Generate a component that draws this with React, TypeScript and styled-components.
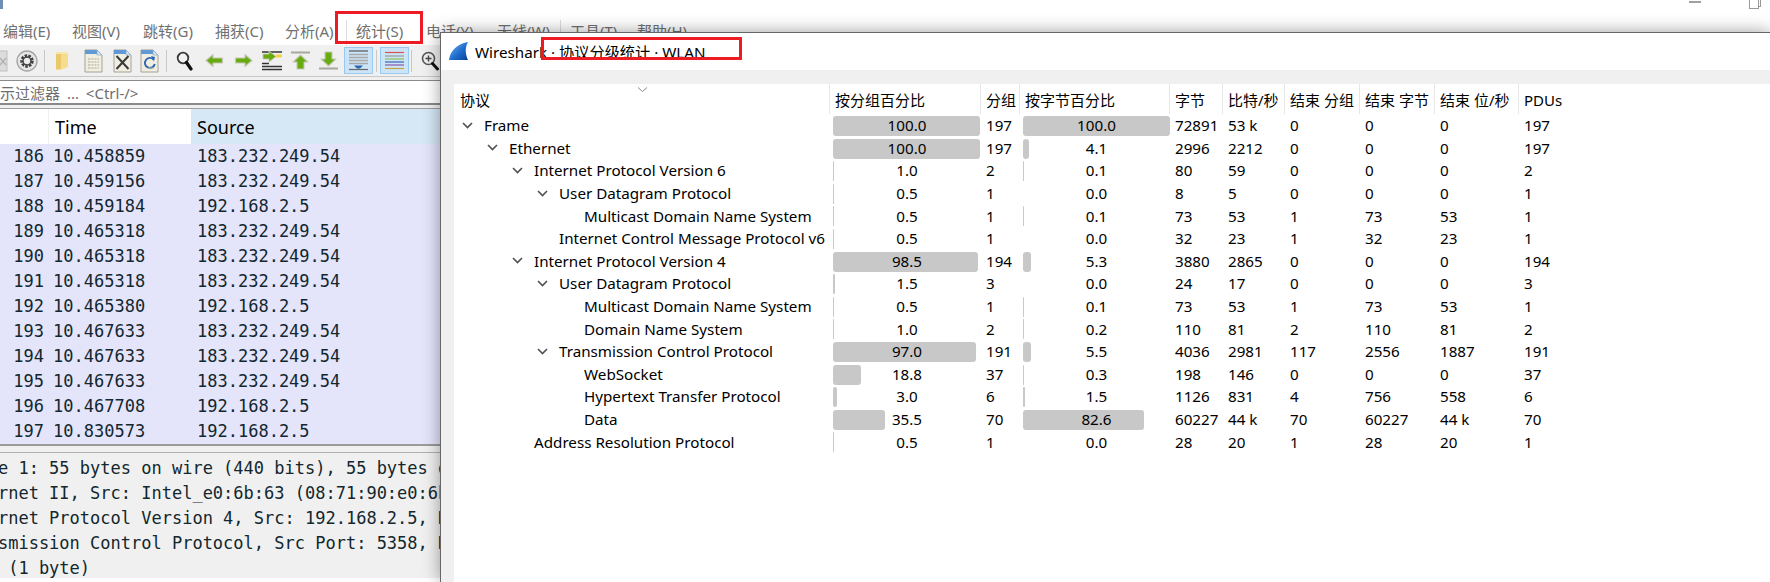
import React from 'react';
import styled, { createGlobalStyle } from 'styled-components';

const UI_FONT = `"Noto Sans", "Noto Sans CJK SC", sans-serif`;
const MONO_FONT = `"DejaVu Sans Mono", "Liberation Mono", monospace`;

const GlobalStyle = createGlobalStyle`
  html, body {
    margin: 0;
    padding: 0;
    background: #fff;
    overflow: hidden;
  }
  * {
    box-sizing: border-box;
  }
`;

/* ---------- data ---------- */

const MENUS = [
  { label: '编辑(E)', width: 69 },
  { label: '视图(V)', width: 71 },
  { label: '跳转(G)', width: 72 },
  { label: '捕获(C)', width: 70 },
  { label: '分析(A)', width: 62, divider: true },
  { label: '统计(S)', width: 70 },
  { label: '电话(Y)', width: 71 },
  { label: '无线(W)', width: 64, divider: true },
  { label: '工具(T)', width: 67 },
  { label: '帮助(H)', width: 70 },
];

const PACKETS = [
  ['186', '10.458859', '183.232.249.54'],
  ['187', '10.459156', '183.232.249.54'],
  ['188', '10.459184', '192.168.2.5'],
  ['189', '10.465318', '183.232.249.54'],
  ['190', '10.465318', '183.232.249.54'],
  ['191', '10.465318', '183.232.249.54'],
  ['192', '10.465380', '192.168.2.5'],
  ['193', '10.467633', '183.232.249.54'],
  ['194', '10.467633', '183.232.249.54'],
  ['195', '10.467633', '183.232.249.54'],
  ['196', '10.467708', '192.168.2.5'],
  ['197', '10.830573', '192.168.2.5'],
];

const DETAILS = [
  'Frame 1: 55 bytes on wire (440 bits), 55 bytes on wire (440 bits)',
  'Ethernet II, Src: Intel_e0:6b:63 (08:71:90:e0:6b:63), Dst: Hiwifi',
  'Internet Protocol Version 4, Src: 192.168.2.5, Dst: 183.232.249.54',
  'Transmission Control Protocol, Src Port: 5358, Dst Port: 443',
  'Data (1 byte)',
];

const HEADERS = ['协议', '按分组百分比', '分组', '按字节百分比', '字节', '比特/秒', '结束 分组', '结束 字节', '结束 位/秒', 'PDUs'];

type Proto = {
  name: string;
  depth: number;
  open?: boolean;
  pktPct: string;
  bytePct: string;
  cols: string[];
};

const PROTOCOLS: Proto[] = [
  { name: 'Frame', depth: 0, open: true, pktPct: '100.0', bytePct: '100.0', cols: ['197', '72891', '53 k', '0', '0', '0', '197'] },
  { name: 'Ethernet', depth: 1, open: true, pktPct: '100.0', bytePct: '4.1', cols: ['197', '2996', '2212', '0', '0', '0', '197'] },
  { name: 'Internet Protocol Version 6', depth: 2, open: true, pktPct: '1.0', bytePct: '0.1', cols: ['2', '80', '59', '0', '0', '0', '2'] },
  { name: 'User Datagram Protocol', depth: 3, open: true, pktPct: '0.5', bytePct: '0.0', cols: ['1', '8', '5', '0', '0', '0', '1'] },
  { name: 'Multicast Domain Name System', depth: 4, pktPct: '0.5', bytePct: '0.1', cols: ['1', '73', '53', '1', '73', '53', '1'] },
  { name: 'Internet Control Message Protocol v6', depth: 3, pktPct: '0.5', bytePct: '0.0', cols: ['1', '32', '23', '1', '32', '23', '1'] },
  { name: 'Internet Protocol Version 4', depth: 2, open: true, pktPct: '98.5', bytePct: '5.3', cols: ['194', '3880', '2865', '0', '0', '0', '194'] },
  { name: 'User Datagram Protocol', depth: 3, open: true, pktPct: '1.5', bytePct: '0.0', cols: ['3', '24', '17', '0', '0', '0', '3'] },
  { name: 'Multicast Domain Name System', depth: 4, pktPct: '0.5', bytePct: '0.1', cols: ['1', '73', '53', '1', '73', '53', '1'] },
  { name: 'Domain Name System', depth: 4, pktPct: '1.0', bytePct: '0.2', cols: ['2', '110', '81', '2', '110', '81', '2'] },
  { name: 'Transmission Control Protocol', depth: 3, open: true, pktPct: '97.0', bytePct: '5.5', cols: ['191', '4036', '2981', '117', '2556', '1887', '191'] },
  { name: 'WebSocket', depth: 4, pktPct: '18.8', bytePct: '0.3', cols: ['37', '198', '146', '0', '0', '0', '37'] },
  { name: 'Hypertext Transfer Protocol', depth: 4, pktPct: '3.0', bytePct: '1.5', cols: ['6', '1126', '831', '4', '756', '558', '6'] },
  { name: 'Data', depth: 4, pktPct: '35.5', bytePct: '82.6', cols: ['70', '60227', '44 k', '70', '60227', '44 k', '70'] },
  { name: 'Address Resolution Protocol', depth: 2, pktPct: '0.5', bytePct: '0.0', cols: ['1', '28', '20', '1', '28', '20', '1'] },
];

/* ---------- toolbar icons ---------- */

const Svg = styled.svg`
  display: block;
  flex-shrink: 0;
`;

const CutIcon = () => (
  <Svg width="9" height="22" viewBox="0 0 9 22">
    <rect x="-6" y="1" width="13" height="20" fill="#dcdcdc" stroke="#bdbdbd" />
    <path d="M0 8l6 7M6 8l-6 7" stroke="#b0b0b0" strokeWidth="1.3" />
  </Svg>
);

const GearIcon = () => (
  <Svg width="22" height="22" viewBox="0 0 22 22">
    <circle cx="11" cy="11" r="10" fill="#e6e6e6" stroke="#a4a4a4" strokeWidth="1.3" />
    <circle cx="11" cy="11" r="5.2" fill="none" stroke="#3f3f3f" strokeWidth="3" strokeDasharray="2.4 1.2" />
    <circle cx="11" cy="11" r="4" fill="none" stroke="#444" strokeWidth="1.4" />
    <circle cx="11" cy="11" r="2.2" fill="#eee" />
  </Svg>
);

const FolderIcon = () => (
  <Svg width="14" height="20" viewBox="0 0 14 20">
    <path d="M1 1h12v15l-8 3H1z" fill="#f6dc8c" />
    <path d="M1 1h5v17H1z" fill="#e8c96c" />
    <path d="M1 1h12v2H1z" fill="#f9e7a9" />
  </Svg>
);

const DocBase = ({ children }: { children?: React.ReactNode }) => (
  <Svg width="19" height="24" viewBox="0 0 19 24">
    <path d="M1 1h12l5 5v17H1z" fill="#f0eee0" stroke="#a3a396" />
    <path d="M1 1h12v4H1z" fill="#5f9ad6" />
    <path d="M13 1l5 5h-5z" fill="#d8e6f2" stroke="#7da3c8" strokeWidth=".6" />
    {children}
  </Svg>
);

const DocGridIcon = () => (
  <DocBase>
    <path d="M4 9h11v11H4z" fill="#cfcbb8" />
    <path d="M4 11.5h11M4 14.5h11M4 17.5h11M7 9v11M10 9v11M13 9v11" stroke="#f5f3e8" strokeWidth=".9" />
  </DocBase>
);

const DocCloseIcon = () => (
  <DocBase>
    <path d="M3.5 7l12 13M15.5 7l-12 13" stroke="#3a3a3a" strokeWidth="2" />
  </DocBase>
);

const DocReloadIcon = () => (
  <DocBase>
    <path d="M13.6 10.5a5 5 0 1 0 1.2 4.5" fill="none" stroke="#2a67b4" strokeWidth="1.9" />
    <path d="M11 7l4 1-1 4.5z" fill="#2a67b4" />
    <path d="M8 19h6" stroke="#b9b6a4" strokeWidth="1" />
  </DocBase>
);

const SearchIcon = () => (
  <Svg width="17" height="20" viewBox="0 0 17 20">
    <circle cx="7" cy="7" r="5.3" fill="#f2f2f2" stroke="#3a3a3a" strokeWidth="1.8" />
    <path d="M10.5 11.5L15 18" stroke="#111" strokeWidth="3.2" strokeLinecap="round" />
  </Svg>
);

const ArrowH = ({ dir }: { dir: 'left' | 'right' }) => (
  <Svg width="19" height="15" viewBox="0 0 19 15">
    <g transform={dir === 'right' ? 'translate(19 0) scale(-1 1)' : undefined}>
      <path d="M1 7.5L8 1.5v3.5h9.5v5H8v3.5z" fill="#67ab10" stroke="#c8c8b8" strokeWidth="1.2" strokeLinejoin="round" />
    </g>
  </Svg>
);

const GoToIcon = () => (
  <Svg width="20" height="20" viewBox="0 0 20 20">
    <path d="M0 1h20M0 15.5h20M0 18.5h20M0 12.5h7" stroke="#333" strokeWidth="1.6" />
    <path d="M14 5h6" stroke="#f3d34a" strokeWidth="3" />
    <path d="M1 3h6V0l7 5.5L7 11V8H1z" fill="#67ab10" stroke="#c8c8b8" strokeWidth=".9" />
  </Svg>
);

const GoTopIcon = () => (
  <Svg width="19" height="19" viewBox="0 0 19 19">
    <path d="M0 1.5h19" stroke="#a8a89e" strokeWidth="2" />
    <path d="M9.5 4L17 11h-4v7H6v-7H2z" fill="#67ab10" stroke="#c8c8b8" strokeWidth="1.1" strokeLinejoin="round" />
  </Svg>
);

const GoBottomIcon = () => (
  <Svg width="19" height="19" viewBox="0 0 19 19">
    <path d="M0 17.5h19" stroke="#a8a89e" strokeWidth="2" />
    <path d="M9.5 15L2 8h4V1h7v7h4z" fill="#67ab10" stroke="#c8c8b8" strokeWidth="1.1" strokeLinejoin="round" />
  </Svg>
);

const AutoScrollIcon = () => (
  <Svg width="21" height="21" viewBox="0 0 21 21">
    <path d="M1 1h19" stroke="#555" strokeWidth="1.2" />
    <path d="M1 4.5h19M1 7.5h19M1 10.5h19M1 13.5h19" stroke="#a8a8a8" strokeWidth="1.4" />
    <path d="M1 19.5h19" stroke="#666" strokeWidth="1.2" />
    <path d="M6 15.5h9l-3 3h-3z" fill="#2a66a8" />
  </Svg>
);

const ColorizeIcon = () => (
  <Svg width="19" height="19" viewBox="0 0 19 19">
    <path d="M0 1.5h19" stroke="#d9534f" strokeWidth="1.2" />
    <path d="M0 5h19" stroke="#999" strokeWidth="1.2" />
    <path d="M0 8h19" stroke="#8cc152" strokeWidth="1.2" />
    <path d="M0 11h19" stroke="#3f62b5" strokeWidth="1.2" />
    <path d="M0 14h19" stroke="#8a5aa8" strokeWidth="1.2" />
    <path d="M0 17.5h19" stroke="#c9a23c" strokeWidth="1.2" />
  </Svg>
);

const ZoomInIcon = () => (
  <Svg width="18" height="20" viewBox="0 0 18 20">
    <circle cx="7.5" cy="7.5" r="6" fill="#eee" stroke="#555" strokeWidth="1.6" />
    <path d="M4.5 7.5h6M7.5 4.5v6" stroke="#444" strokeWidth="1.4" />
    <path d="M11.5 12.5L16.5 18" stroke="#111" strokeWidth="3" strokeLinecap="round" />
  </Svg>
);

const SharkFin = () => (
  <Svg width="20" height="20" viewBox="0 0 20 20">
    <defs>
      <linearGradient id="fin" x1="0" y1="0" x2="1" y2="1">
        <stop offset="0" stopColor="#7fb6ee" />
        <stop offset=".55" stopColor="#1f6fd0" />
        <stop offset="1" stopColor="#0a3f92" />
      </linearGradient>
    </defs>
    <path d="M0 19C1 11 7 3 19 1c-3 5-3 12 0 18z" fill="url(#fin)" />
  </Svg>
);

const Chevron = () => (
  <Svg width="11" height="7" viewBox="0 0 11 7">
    <path d="M1 1l4.5 4.5L10 1" fill="none" stroke="#505050" strokeWidth="1.6" />
  </Svg>
);

/* ---------- page ---------- */

const Desktop = styled.div`
  position: relative;
  width: 1770px;
  height: 582px;
  overflow: hidden;
  background: #fff;
  font-family: ${UI_FONT};
`;

const TitleStrip = styled.div`
  height: 20px;
  display: flex;
  justify-content: space-between;
  padding-right: 11px;
`;

const AppGlyph = styled.div`
  width: 3px;
  height: 9px;
  background: #6d8fb5;
`;

const WindowButtons = styled.div`
  display: flex;
  gap: 46px;
`;

const MinimizeBtn = styled.div`
  width: 12px;
  height: 2px;
  margin-top: 1px;
  background: #a0a0a0;
`;

const RestoreBtn = styled.div`
  position: relative;
  width: 10px;
  height: 9px;
  margin: 0 0 0 2px;
  border: 1px solid #999;
  border-top: 0;

  &::after {
    content: '';
    position: absolute;
    right: -3px;
    top: 0;
    width: 2px;
    height: 6px;
    border: 1px solid #999;
    border-top: 0;
    border-left: 0;
  }
`;

const MenuBar = styled.div`
  height: 25px;
  display: flex;
  align-items: center;
  padding-left: 3px;
`;

const MenuItem = styled.div<{ $w: number; $divider?: boolean }>`
  width: ${p => p.$w}px;
  height: 100%;
  flex-shrink: 0;
  display: flex;
  align-items: center;
  padding-bottom: 4px;
  font-size: 15px;
  color: #707070;
  white-space: nowrap;
  border-right: ${p => (p.$divider ? '1px solid #dcdcdc' : '0')};
  margin-right: ${p => (p.$divider ? '9px' : '0')};
`;

const Toolbar = styled.div`
  height: 31px;
  display: flex;
  align-items: center;
  background: #f0f0f0;
`;

const ToolCell = styled.div<{ $w: number; $start?: boolean }>`
  width: ${p => p.$w}px;
  height: 100%;
  flex-shrink: 0;
  display: flex;
  align-items: center;
  justify-content: ${p => (p.$start ? 'flex-start' : 'center')};
`;

const ToolSep = styled.div<{ $w: number }>`
  width: ${p => p.$w}px;
  flex-shrink: 0;
  height: 22px;
  display: flex;
  justify-content: center;

  &::before {
    content: '';
    width: 1px;
    height: 100%;
    background: #c9c9c9;
  }
`;

const ToggledTool = styled.div`
  width: 29px;
  height: 27px;
  flex-shrink: 0;
  display: flex;
  align-items: center;
  justify-content: center;
  background: #cce4f7;
  border: 1px solid #99c9ef;
`;

const FilterWrap = styled.div`
  height: 29px;
  background: #f0f0f0;
  border-top: 1px solid #c8c8c8;
  padding-top: 3px;
`;

const FilterInput = styled.div`
  height: 25px;
  background: #fff;
  border-top: 1px solid #8a8a8a;
  border-bottom: 2px solid #8a8a8a;
  overflow: hidden;
  display: flex;
  align-items: center;
`;

const FilterText = styled.span`
  margin-left: -45px;
  font-size: 15px;
  word-spacing: 3px;
  color: #6d6d6d;
  white-space: nowrap;
`;

const ListTop = styled.div`
  height: 4px;
  background: #f0f0f0;
  border-bottom: 1px solid #a0a0a0;
`;

const ListHeader = styled.div`
  height: 35px;
  display: grid;
  grid-template-columns: 48px 143px 1fr;
  background: #fff;
  font-size: 18px;
  color: #000;
`;

const HeaderCell = styled.div<{ $active?: boolean }>`
  display: flex;
  align-items: center;
  padding-left: 6px;
  background: ${p => (p.$active ? '#d6e8f6' : '#fff')};
  border-left: ${p => (p.$active ? '0' : '1px solid #f0f0f0')};
`;

const PacketRow = styled.div`
  height: 25px;
  display: grid;
  grid-template-columns: 44px 153px 1fr;
  align-items: center;
  padding-bottom: 2px;
  background: #e4e4fb;
  font-family: ${MONO_FONT};
  font-size: 17px;
  color: #12272e;
`;

const PacketNo = styled.span`
  text-align: right;
`;

const PacketTime = styled.span`
  padding-left: 9px;
`;

const PaneSplit = styled.div`
  height: 9px;
  background: #f0f0f0;
  border-top: 2px solid #9a9a9a;
  border-bottom: 1px solid #b0b0b0;
`;

const DetailPane = styled.div`
  height: 125px;
  padding-top: 3px;
  background: #f0f0f0;
  overflow: hidden;
  font-family: ${MONO_FONT};
  font-size: 17px;
  color: #12272e;
`;

const DetailLine = styled.div`
  height: 25px;
  line-height: 25px;
  margin-left: -43px;
  white-space: nowrap;
`;

const RedBox = styled.div<{ $x: number; $y: number; $w: number; $h: number }>`
  position: absolute;
  left: ${p => p.$x}px;
  top: ${p => p.$y}px;
  width: ${p => p.$w}px;
  height: ${p => p.$h}px;
  border: 3px solid #ed1c24;
  z-index: 5;
`;

const Dialog = styled.div`
  position: absolute;
  left: 440px;
  top: 32px;
  right: 0;
  bottom: 0;
  display: flex;
  flex-direction: column;
  background: #f0f0f0;
  border-top: 1px solid #666;
  border-left: 1px solid #666;
  box-shadow: 0 0 16px rgba(0, 0, 0, 0.38);
`;

const DialogTitle = styled.div`
  height: 37px;
  flex-shrink: 0;
  display: flex;
  align-items: center;
  gap: 6px;
  padding: 0 0 2px 8px;
  background: #fff;
  font-size: 15.2px;
  color: #000;
`;

const DialogBody = styled.div`
  flex: 1;
  padding: 14px 0 0 13px;
`;

const Table = styled.div`
  position: relative;
  height: 100%;
  background: #fff;
  color: #000;
  font-size: 15.2px;
`;

const COLUMNS = '376px 151px 39px 150px 53px 62px 75px 75px 84px 1fr';

const TableHead = styled.div`
  height: 30px;
  display: grid;
  grid-template-columns: ${COLUMNS};
`;

const HeadCell = styled.div<{ $first?: boolean }>`
  display: flex;
  align-items: center;
  padding: 1px 0 0 ${p => (p.$first ? '6px' : '5px')};
  font-size: 15px;
  border-right: 1px solid #e6e6e6;
  white-space: nowrap;

  &:last-child {
    border-right: 0;
  }
`;

const SortCaret = styled.svg`
  position: absolute;
  left: 183px;
  top: 3px;
`;

const Row = styled.div`
  height: 22.6px;
  display: grid;
  grid-template-columns: ${COLUMNS};
  align-items: center;
`;

const TreeCell = styled.div<{ $depth: number }>`
  display: flex;
  align-items: center;
  height: 100%;
  padding-left: ${p => 8 + p.$depth * 25}px;
  white-space: nowrap;
`;

const TreeToggle = styled.span`
  width: 22px;
  flex-shrink: 0;
  display: flex;
`;

const NumCell = styled.div`
  padding-left: 5px;
  white-space: nowrap;
`;

const BarCell = styled.div`
  position: relative;
  height: 100%;
  display: flex;
  align-items: center;
  justify-content: center;
  padding-left: 3px;
`;

const Bar = styled.div`
  position: absolute;
  left: 3px;
  top: 2px;
  bottom: 0.6px;
  background: #c8c8c8;
  border-radius: 3px;
`;

const BarValue = styled.span`
  position: relative;
`;

const BAR_MAX = 147;

const PercentCell = ({ value }: { value: string }) => (
  <BarCell>
    <Bar style={{ width: (parseFloat(value) * BAR_MAX) / 100 }} />
    <BarValue>{value}</BarValue>
  </BarCell>
);

const App = () => {
  return (
    <Desktop>
      <GlobalStyle />
      <TitleStrip>
        <AppGlyph />
        <WindowButtons>
          <MinimizeBtn />
          <RestoreBtn />
        </WindowButtons>
      </TitleStrip>
      <MenuBar>
        {MENUS.map(m => (
          <MenuItem key={m.label} $w={m.width} $divider={m.divider}>
            {m.label}
          </MenuItem>
        ))}
      </MenuBar>
      <Toolbar>
        <ToolCell $w={13} $start><CutIcon /></ToolCell>
        <ToolCell $w={28}><GearIcon /></ToolCell>
        <ToolSep $w={6} />
        <ToolCell $w={30}><FolderIcon /></ToolCell>
        <ToolCell $w={32}><DocGridIcon /></ToolCell>
        <ToolCell $w={26}><DocCloseIcon /></ToolCell>
        <ToolCell $w={28}><DocReloadIcon /></ToolCell>
        <ToolSep $w={6} />
        <ToolCell $w={30}><SearchIcon /></ToolCell>
        <ToolCell $w={30}><ArrowH dir="left" /></ToolCell>
        <ToolCell $w={28}><ArrowH dir="right" /></ToolCell>
        <ToolCell $w={30}><GoToIcon /></ToolCell>
        <ToolCell $w={26}><GoTopIcon /></ToolCell>
        <ToolCell $w={31}><GoBottomIcon /></ToolCell>
        <ToggledTool><AutoScrollIcon /></ToggledTool>
        <ToolSep $w={7} />
        <ToggledTool><ColorizeIcon /></ToggledTool>
        <ToolSep $w={5} />
        <ToolCell $w={32}><ZoomInIcon /></ToolCell>
      </Toolbar>
      <FilterWrap>
        <FilterInput>
          <FilterText>应用显示过滤器 ... &lt;Ctrl-/&gt;</FilterText>
        </FilterInput>
      </FilterWrap>
      <ListTop />
      <ListHeader>
        <div />
        <HeaderCell>Time</HeaderCell>
        <HeaderCell $active>Source</HeaderCell>
      </ListHeader>
      {PACKETS.map(([no, time, src]) => (
        <PacketRow key={no}>
          <PacketNo>{no}</PacketNo>
          <PacketTime>{time}</PacketTime>
          <span>{src}</span>
        </PacketRow>
      ))}
      <PaneSplit />
      <DetailPane>
        {DETAILS.map(line => (
          <DetailLine key={line}>{line}</DetailLine>
        ))}
      </DetailPane>

      <RedBox $x={335} $y={11} $w={88} $h={33} />
      <RedBox $x={541} $y={37} $w={201} $h={23} />

      <Dialog>
        <DialogTitle>
          <SharkFin />
          Wireshark · 协议分级统计 · WLAN
        </DialogTitle>
        <DialogBody>
          <Table>
            <SortCaret width="11" height="5" viewBox="0 0 11 5">
              <path d="M1 .5l4.5 4L10 .5" fill="none" stroke="#8a8a8a" />
            </SortCaret>
            <TableHead>
              {HEADERS.map((h, i) => (
                <HeadCell key={h} $first={i === 0}>{h}</HeadCell>
              ))}
            </TableHead>
            {PROTOCOLS.map((p, i) => (
              <Row key={i}>
                <TreeCell $depth={p.depth}>
                  <TreeToggle>{p.open && <Chevron />}</TreeToggle>
                  {p.name}
                </TreeCell>
                <PercentCell value={p.pktPct} />
                <NumCell>{p.cols[0]}</NumCell>
                <PercentCell value={p.bytePct} />
                {p.cols.slice(1).map((c, j) => (
                  <NumCell key={j}>{c}</NumCell>
                ))}
              </Row>
            ))}
          </Table>
        </DialogBody>
      </Dialog>
    </Desktop>
  );
};

export default App;
